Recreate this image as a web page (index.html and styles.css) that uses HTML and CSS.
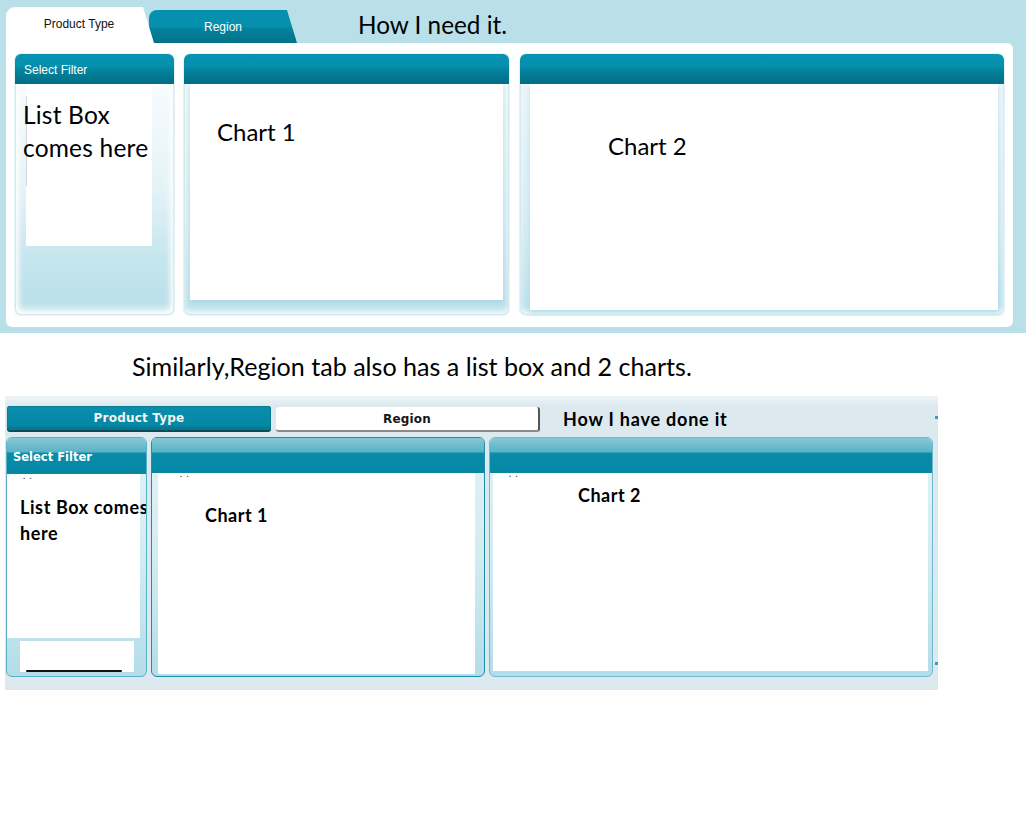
FILE: index.html
```html
<!DOCTYPE html>
<html>
<head>
<meta charset="utf-8">
<link rel="stylesheet" href="styles.css">
</head>
<body>
<section class="need">
  <div class="need-tabs">
    <div class="ntab ntab-active">Product Type</div>
    <div class="ntab ntab-idle">Region</div>
    <div class="need-title">How I need it.</div>
  </div>
  <div class="board">
    <div class="npanel npanel-filter">
      <div class="nhead">Select Filter</div>
      <div class="nbody nbody-filter">
        <div class="nlist">
          <span class="nlist-line"></span>
          <div class="nlist-text">List Box<br>comes here</div>
        </div>
      </div>
    </div>
    <div class="npanel npanel-c1">
      <div class="nhead"></div>
      <div class="nbody nbody-c1">
        <div class="nchart nchart-1">Chart 1</div>
      </div>
    </div>
    <div class="npanel npanel-c2">
      <div class="nhead"></div>
      <div class="nbody nbody-c2">
        <div class="nchart nchart-2">Chart 2</div>
      </div>
    </div>
  </div>
</section>

<p class="note">Similarly,Region tab also has a list box and 2 charts.</p>

<section class="done">
  <div class="done-tabs">
    <div class="dtab dtab-active">Product Type</div>
    <div class="dtab dtab-idle">Region</div>
    <div class="done-title">How I have done it</div>
  </div>
  <div class="done-panels">
    <div class="dpanel dpanel-filter">
      <div class="dhead">Select Filter</div>
      <div class="dbody">
        <div class="dlist">
          <span class="dots">. .</span>
          <div class="dlist-text">List Box comes<br>here</div>
        </div>
        <div class="dmini"></div>
      </div>
    </div>
    <div class="dpanel dpanel-c1">
      <div class="dhead"></div>
      <div class="dbody">
        <div class="dchart dchart-1"><span class="dots">. .</span><div class="dchart-label dlabel-1">Chart 1</div></div>
      </div>
    </div>
    <div class="dpanel dpanel-c2">
      <div class="dhead"></div>
      <div class="dbody">
        <div class="dchart dchart-2"><span class="dots">. .</span><div class="dchart-label dlabel-2">Chart 2</div></div>
      </div>
    </div>
    <span class="mark mark-top"></span>
    <span class="mark mark-bottom"></span>
  </div>
</section>
</body>
</html>
```

FILE: styles.css
```css
* { box-sizing: border-box; }
html, body { margin: 0; padding: 0; background: #fff; }
body { width: 1026px; height: 824px; overflow: hidden; font-family: "Lato", "Liberation Sans", sans-serif; color: #000; }

/* ---------- top: how I need it ---------- */
.need {
  width: 1026px;
  height: 333px;
  background: #b9e0e8;
  padding: 7px 13px 6px 6px;
}
.need-tabs {
  display: flex;
  align-items: flex-end;
  height: 36px;
}
.ntab {
  font-family: "Liberation Sans", Arial, sans-serif;
  font-size: 12px;
  display: flex;
  justify-content: center;
}
.ntab-active {
  position: relative;
  z-index: 2;
  width: 148px;
  height: 36px;
  background: #fff;
  border-radius: 9px 6px 0 0;
  clip-path: polygon(0 0, 137px 0, 148px 100%, 0 100%);
  padding: 10px 2px 0 0;
  color: #111;
}
.ntab-idle {
  position: relative;
  z-index: 1;
  margin-left: -5px;
  width: 148px;
  height: 33px;
  border-radius: 8px 6px 0 0;
  clip-path: polygon(0 0, 138px 0, 148px 100%, 0 100%);
  background: linear-gradient(#0592af 0%, #0590ad 50%, #04829c 56%, #037289 100%);
  color: #fff;
  padding: 10px 0 0 0;
}
.need-title {
  margin-left: 61px;
  align-self: flex-start;
  padding-top: 3px;
  font-size: 24.3px;
  line-height: 30px;
}
.board {
  display: flex;
  gap: 10px;
  width: 1007px;
  height: 284px;
  background: #fff;
  border-radius: 0 6px 6px 6px;
  padding: 11px 9px 12px 9px;
}
.npanel {
  display: flex;
  flex-direction: column;
  border-radius: 6px;
  background: #fff;
  box-shadow: 0 0 0 1px #e4f3f7;
}
.npanel-filter { width: 159px; }
.npanel-c1 { width: 325px; }
.npanel-c2 { width: 484px; margin-left: 1px; }
.nhead {
  height: 30px;
  border-radius: 6px 6px 0 0;
  background: linear-gradient(#0894b1 0%, #0590ad 40%, #04839d 55%, #02758c 85%, #026d82 100%);
  color: #fff;
  font-family: "Liberation Sans", Arial, sans-serif;
  font-size: 12px;
  padding: 9px 0 0 9px;
}
.nbody {
  flex: 1;
  border-radius: 0 0 6px 6px;
  border: 1px solid #d4eaf0;
  border-top: none;
}
.nbody-filter {
  background: linear-gradient(#f7fcfd 0%, #e4f3f7 45%, #c6e6ee 75%, #b8dfe9 100%);
  box-shadow: inset 0 -6px 8px -2px #fff, inset 4px 0 6px -2px #fff, inset -4px 0 6px -2px #fff;
  padding-left: 10px;
}
.nlist {
  position: relative;
  width: 126px;
  height: 162px;
  background: #fff;
}
.nlist-line {
  position: absolute;
  left: 0;
  top: 12px;
  width: 1px;
  height: 90px;
  background: #d5d5d5;
}
.nlist-text {
  position: relative;
  margin-left: -3px;
  padding-top: 14px;
  font-size: 24.5px;
  line-height: 33px;
  letter-spacing: 0.2px;
  white-space: nowrap;
}
.nbody-c1, .nbody-c2 {
  background: linear-gradient(#eaf6f9 0%, #d7eef3 60%, #bfe3ec 100%);
  box-shadow: inset 0 -4px 6px -2px #fff;
}
.nbody-c1 { padding: 0 5px 0 5px; }
.nbody-c2 { padding: 0 5px 0 9px; }
.nchart {
  background: #fff;
  font-size: 24px;
  line-height: 30px;
  box-shadow: 0 3px 5px rgba(120, 190, 210, 0.35);
}
.nchart-1 { height: 216px; padding: 33px 0 0 27px; }
.nchart-2 { height: 226px; padding: 47px 0 0 78px; }

/* ---------- middle note ---------- */
.note {
  margin: 0;
  height: 63px;
  padding: 18px 0 0 132px;
  font-size: 25.1px;
  line-height: 30px;
}

/* ---------- bottom: how I have done it ---------- */
.done {
  margin-left: 5px;
  width: 933px;
  height: 294px;
  background: linear-gradient(#eef4f6 0px, #dce9ee 10px, #dde9ee 100%);
  padding-top: 10px;
}
.done-tabs {
  display: flex;
  align-items: center;
  height: 26px;
  padding-left: 2px;
}
.dtab {
  width: 264px;
  height: 26px;
  border-radius: 3px;
  font-family: "DejaVu Sans", Verdana, sans-serif;
  font-weight: bold;
  font-size: 12px;
  letter-spacing: 0.2px;
  display: flex;
  align-items: center;
  justify-content: center;
}
.dtab-active {
  background: linear-gradient(#0a8eab, #0488a5 80%, #056f86);
  color: #f4f4f4;
  border-bottom: 2px solid #0a4b5a;
  box-shadow: inset 0 0 0 1px #0b7892;
}
.dtab-idle {
  margin-left: 5px;
  height: 25px;
  background: #fff;
  color: #161616;
  border-right: 2px solid #555;
  border-bottom: 2px solid #8a8a8a;
  border-radius: 3px;
  padding-top: 1px;
}
.done-title {
  margin-left: 23px;
  font-size: 18px;
  font-weight: bold;
  letter-spacing: 0.8px;
}
.done-panels {
  position: relative;
  display: flex;
  gap: 4px;
  margin-top: 5px;
  padding-left: 1px;
  height: 240px;
}
.dpanel {
  display: flex;
  flex-direction: column;
  border: 1px solid #3fa3ba;
  border-radius: 6px;
  background: linear-gradient(#e2f2f6 0%, #d2ecf2 50%, #b3dde8 100%);
  overflow: hidden;
}
.dpanel-filter { width: 141px; border-color: #5ab0c4; }
.dpanel-c1 { width: 334px; border-color: #1d8ea9; }
.dpanel-c2 { width: 444px; border-color: #6cbccd; }
.dhead {
  height: 36px;
  background: linear-gradient(#86c7d6 0px, #6dbbcd 8px, #5cb2c6 14px, #0b8ca8 15px, #0589a6 30px, #0a86a0 36px);
  color: #fff;
  font-family: "DejaVu Sans", Verdana, sans-serif;
  font-weight: bold;
  font-size: 11.5px;
  padding: 12px 0 0 6px;
  flex: none;
}
.dpanel-c1 .dhead, .dpanel-c2 .dhead { height: 35px; }
.dbody { flex: 1; position: relative; }
.dlist {
  position: relative;
  width: 133px;
  height: 164px;
  background: #fff;
}
.dots {
  position: absolute;
  top: -4px;
  font-size: 9px;
  letter-spacing: 1px;
  color: #222;
}
.dlist .dots { left: 16px; }
.dlist-text {
  position: relative;
  padding: 20px 0 0 13px;
  font-size: 18px;
  font-weight: bold;
  line-height: 26px;
  letter-spacing: 0.6px;
  white-space: nowrap;
}
.dmini {
  position: relative;
  margin: 3px 0 0 13px;
  width: 114px;
  height: 31px;
  background: #fff;
}
.dmini::after {
  content: "";
  position: absolute;
  left: 6px;
  right: 12px;
  bottom: 0;
  height: 2px;
  border-radius: 1px;
  background: #111;
}
.dchart {
  position: relative;
  background: #fff;
}
.dpanel-c1 .dchart { margin-left: 6px; width: 317px; height: 201px; }
.dpanel-c2 .dchart { margin-left: 3px; width: 435px; height: 198px; }
.dchart-1 .dots { left: 22px; top: -5px; }
.dchart-2 .dots { left: 16px; top: -5px; }
.dchart-label {
  font-size: 18px;
  font-weight: bold;
  line-height: 22px;
  letter-spacing: 0.5px;
}
.dlabel-1 { padding: 31px 0 0 47px; }
.dlabel-2 { padding: 11px 0 0 85px; }
.mark {
  position: absolute;
  left: 930px;
  width: 3px;
  height: 3px;
  background: #3a9fb6;
}
.mark-top { top: -21px; }
.mark-bottom { top: 225px; }
```
